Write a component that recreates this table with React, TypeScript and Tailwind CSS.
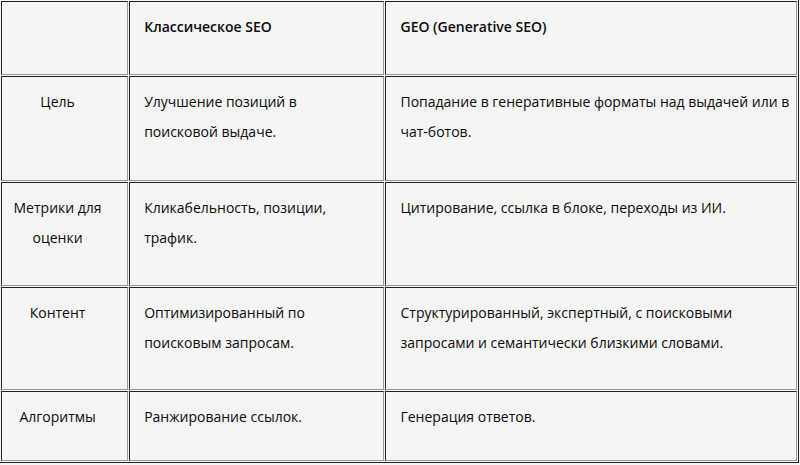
import React from "react";

const rows: { label: string[]; a: string[]; b: string[]; h: string }[] = [
  {
    label: ["Цель"],
    a: ["Улучшение позиций в", "поисковой выдаче."],
    b: ["Попадание в генеративные форматы над выдачей или в", "чат-ботов."],
    h: "h-[105px]",
  },
  {
    label: ["Метрики для", "оценки"],
    a: ["Кликабельность, позиции,", "трафик."],
    b: ["Цитирование, ссылка в блоке, переходы из ИИ."],
    h: "h-[104px]",
  },
  {
    label: ["Контент"],
    a: ["Оптимизированный по", "поисковым запросам."],
    b: ["Структурированный, экспертный, с поисковыми", "запросами и семантически близкими словами."],
    h: "h-[103px]",
  },
  {
    label: ["Алгоритмы"],
    a: ["Ранжирование ссылок."],
    b: ["Генерация ответов."],
    h: "h-[70px]",
  },
];

const cell =
  "align-top border-t border-l border-r border-b border-t-[#222] border-l-[#222] border-r-[#999] border-b-[#999] pt-[10px]";

function Lines({ lines }: { lines: string[] }) {
  return (
    <>
      {lines.map((l, i) => (
        <div key={i} className="whitespace-nowrap">
          {l}
        </div>
      ))}
    </>
  );
}

export default function App() {
  return (
    <div
      className="w-[800px] h-[465px] overflow-hidden bg-[#f5f5f5] text-[#0a0a0a] text-[14px] leading-[30px]"
      style={{ fontFamily: '"Open Sans", "Noto Sans", sans-serif' }}
    >
      <table className="border-separate border-spacing-[1px] border-r border-b border-r-[#222] border-b-[#222] table-fixed w-[799px]">
        <colgroup>
          <col className="w-[127px]" />
          <col className="w-[255px]" />
          <col className="w-[411px]" />
        </colgroup>
        <tbody>
          <tr className="h-[74px]">
            <td className={cell}></td>
            <td className={`${cell} pl-[14px] font-semibold`}>Классическое SEO</td>
            <td className={`${cell} pl-[14px] font-semibold`}>GEO (Generative SEO)</td>
          </tr>
          {rows.map((r, i) => (
            <tr key={i} className={r.h}>
              <td className={`${cell} pl-2 pr-[22px] text-center`}>
                <Lines lines={r.label} />
              </td>
              <td className={`${cell} pl-[14px]`}>
                <Lines lines={r.a} />
              </td>
              <td className={`${cell} pl-[14px]`}>
                <Lines lines={r.b} />
              </td>
            </tr>
          ))}
        </tbody>
      </table>
    </div>
  );
}
